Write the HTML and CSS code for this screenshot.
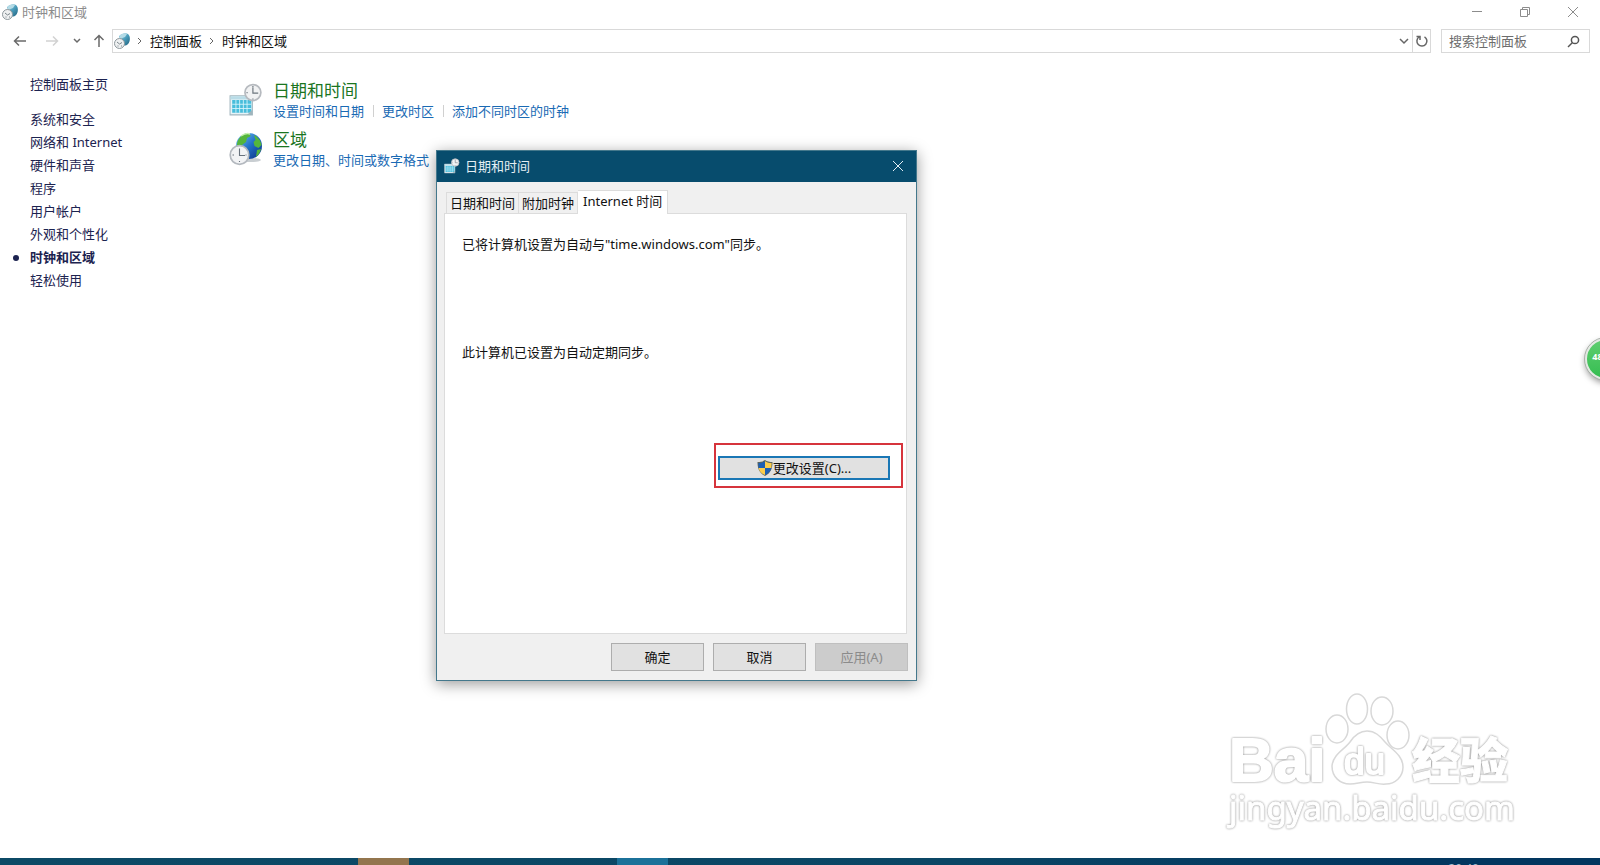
FILE: index.html
```html
<!DOCTYPE html>
<html lang="zh-CN">
<head>
<meta charset="utf-8">
<title>时钟和区域</title>
<link rel="stylesheet" href="styles.css">
</head>
<body>
<svg class="defs" aria-hidden="true">
  <defs>
    <linearGradient id="sea" x1="0" y1="0" x2="1" y2="1"><stop offset="0" stop-color="#7cc8f4"/><stop offset=".5" stop-color="#2272c8"/><stop offset="1" stop-color="#0a2f82"/></linearGradient>
    <linearGradient id="dim" x1="0" y1="0" x2="1" y2="1"><stop offset="0" stop-color="#a5d3e4"/><stop offset=".5" stop-color="#4a9dbb"/><stop offset="1" stop-color="#1f607d"/></linearGradient>
    <symbol id="globe-small" viewBox="0 0 16 16">
      <path d="M5 3C8 0 12-.5 14 1c2.500 2 2.500 7 0 10-2 2-5 2-7 0z" fill="url(#dim)"/>
      <path d="M6 2.500C8 .5 11 0 13 1l-2 3-5 2z" fill="#b4dbe6"/>
      <circle cx="5.500" cy="10.500" r="5" fill="#eef0f1" stroke="#8d979c"/>
      <path d="M3 9l2.500 2L8 9.500M3.500 13h1M7 13h1" fill="none" stroke="#6d7980" stroke-width=".9"/>
    </symbol>
    <symbol id="calendar" viewBox="0 0 32 32">
      <path d="M1 12h21v18H1z" fill="#e6f4f8" stroke="#a4b7bf"/>
      <path d="M1.500 12.500h20v3h-20z" fill="#b9dce7"/>
      <path d="M3 16h18v12H3z" fill="#48bddb"/>
      <path d="M3 20h18M3 24h18M6.500 16v12M10 16v12M13.500 16v12M17 16v12" stroke="#d9f6fc" stroke-width=".8"/>
      <path d="M17 30l5-5v5z" fill="#9fb5bd"/>
      <circle cx="22.500" cy="9" r="7.500" fill="#f1f2f3" stroke="#b6babf" stroke-width="1.600"/>
      <path d="M22.500 4v5.500h5M22.500 2.800v1M22.500 14.500v1M16.500 9h1" fill="none" stroke="#6b747d" stroke-width="1.100"/>
    </symbol>
    <symbol id="region" viewBox="0 0 34 34">
      <ellipse cx="22" cy="28" rx="10" ry="2" fill="#c9ced2"/>
      <circle cx="20" cy="14" r="13" fill="url(#sea)"/>
      <path d="M8 12c1-6 5-10 11-11l3 3-4 2-1 4-4 3-2 5-3-1zM25 3c4 2 7 6 7.500 10l-3 3-4-2-1-4 2-2zM28 18l4-1c-1 4-3 6-5 8z" fill="#54b63c"/>
      <path d="M12 4c3-2 6-3 9-2" fill="none" stroke="#c9f2b0" stroke-width="1.500"/>
      <circle cx="10.500" cy="23" r="9.300" fill="#f2f3f5" stroke="#b4b9bf" stroke-width="1.700"/>
      <path d="M10.500 16.500V23.500H16M10.500 29v1M3.500 23h1.500M16.500 23h1" fill="none" stroke="#68727d" stroke-width="1.100"/>
    </symbol>
  </defs>
</svg>

<header class="titlebar">
  <svg class="icon16"><use href="#globe-small"/></svg>
  <h1 class="window-title">时钟和区域</h1>
  <div class="window-buttons">
    <button aria-label="最小化"><svg width="12" height="12"><path d="M1 5.500h10"/></svg></button>
    <button aria-label="还原"><svg width="12" height="12"><path d="M1.500 3.500h7v7h-7zM3.500 3.500v-2h7v7h-2"/></svg></button>
    <button aria-label="关闭"><svg width="12" height="12"><path d="M1 1l10 10M11 1L1 11"/></svg></button>
  </div>
</header>

<nav class="toolbar" aria-label="导航">
  <div class="nav-buttons">
    <button aria-label="后退"><svg width="14" height="12"><path d="M13 6H1.500M6 1.500 1.500 6 6 10.500"/></svg></button>
    <button class="faint" aria-label="前进"><svg width="14" height="12"><path d="M1 6h11.500M8 1.500 12.500 6 8 10.500"/></svg></button>
    <button class="narrow" aria-label="最近的位置"><svg width="8" height="6"><path d="M1 1l3 3 3-3"/></svg></button>
    <button class="narrow" aria-label="向上"><svg width="12" height="14"><path d="M6 13V2M1.500 6 6 1.500 10.500 6"/></svg></button>
  </div>
  <div class="address">
    <svg class="icon16"><use href="#globe-small"/></svg>
    <svg class="sep" width="6" height="8"><path d="M1 1l3 3-3 3"/></svg>
    <a href="#">控制面板</a>
    <svg class="sep" width="6" height="8"><path d="M1 1l3 3-3 3"/></svg>
    <a href="#">时钟和区域</a>
    <button class="history" aria-label="以前的位置"><svg width="10" height="7"><path d="M1 1l4 4 4-4"/></svg></button>
    <button class="refresh" aria-label="刷新"><svg width="14" height="14"><path d="M9.500 2.800A5 5 0 1 1 4 3M1.500 2.500H5v3.500"/></svg></button>
  </div>
  <form class="search">
    <input type="text" aria-label="搜索控制面板" placeholder="搜索控制面板">
    <svg width="13" height="13"><circle cx="8" cy="5" r="3.600"/><path d="M5.500 7.500 1 12"/></svg>
  </form>
</nav>

<div class="content">
  <aside class="sidebar">
    <a class="home" href="#">控制面板主页</a>
    <ul>
      <li><a href="#">系统和安全</a></li>
      <li><a href="#">网络和 Internet</a></li>
      <li><a href="#">硬件和声音</a></li>
      <li><a href="#">程序</a></li>
      <li><a href="#">用户帐户</a></li>
      <li><a href="#">外观和个性化</a></li>
      <li class="current"><a href="#">时钟和区域</a></li>
      <li><a href="#">轻松使用</a></li>
    </ul>
  </aside>
  <main class="categories">
    <section class="category">
      <svg class="icon34"><use href="#calendar"/></svg>
      <div>
        <h2><a href="#">日期和时间</a></h2>
        <div class="tasks"><a href="#">设置时间和日期</a><a href="#">更改时区</a><a href="#">添加不同时区的时钟</a></div>
      </div>
    </section>
    <section class="category">
      <svg class="icon34"><use href="#region"/></svg>
      <div>
        <h2><a href="#">区域</a></h2>
        <div class="tasks"><a href="#">更改日期、时间或数字格式</a></div>
      </div>
    </section>
  </main>
</div>

<div class="dialog" role="dialog" aria-labelledby="dialog-title">
  <div class="dialog-title">
    <svg class="icon16"><use href="#calendar"/></svg>
    <span id="dialog-title">日期和时间</span>
    <button aria-label="关闭"><svg width="12" height="12"><path d="M1 1l10 10M11 1L1 11"/></svg></button>
  </div>
  <div class="dialog-body">
    <div class="tabs" role="tablist">
      <button role="tab">日期和时间</button>
      <button role="tab">附加时钟</button>
      <button role="tab" class="active" aria-selected="true">Internet 时间</button>
    </div>
    <div class="panel" role="tabpanel">
      <p class="sync">已将计算机设置为自动与"time.windows.com"同步。</p>
      <p class="schedule">此计算机已设置为自动定期同步。</p>
      <div class="highlight">
        <button class="change">
          <svg width="16" height="16" viewBox="0 0 16 16"><path d="M8 0c2 1.500 4.500 2 7.500 2C15.500 8 14 13 8 16 2 13 .5 8 .5 2 3.500 2 6 1.500 8 0z" fill="#5d665f"/><path d="M8 1.200V8H1.600L1.400 3C4 3 6 2.500 8 1.200zM8 8h6.400C13.500 11.500 11.500 13.600 8 15z" fill="#1d5fb4"/><path d="M8 1.200V8h6.400l.2-5C12 3 10 2.500 8 1.200zM8 8H1.600C2.500 11.500 4.500 13.600 8 15z" fill="#fccd4c"/></svg>更改设置(C)...
        </button>
      </div>
    </div>
    <div class="actions">
      <button>确定</button>
      <button>取消</button>
      <button disabled>应用(A)</button>
    </div>
  </div>
</div>

<button class="ball">48</button>

<svg class="watermark" viewBox="0 0 320 160" aria-hidden="true">
  <text class="wm-bold" x="19" y="101" font-size="62">Bai</text>
  <ellipse cx="127" cy="49" rx="11" ry="14"/>
  <ellipse cx="147" cy="29" rx="10.500" ry="15"/>
  <ellipse cx="172" cy="31" rx="11" ry="14"/>
  <ellipse cx="188" cy="55" rx="11" ry="14"/>
  <path d="M157 51c-8 0-13 5-17 11-5 7-17 12-18 24 0 11 8 18 18 18 7 0 10-2 17-2s12 3 19 2c9 0 17-7 17-17 0-12-12-18-18-25-5-6-10-11-18-11z"/>
  <text class="wm-du" x="134" y="94" font-size="37">du</text>
  <text class="wm-cjk" x="202" y="98" font-size="48">经验</text>
  <text class="wm-url" x="19" y="140" font-size="33">jingyan.baidu.com</text>
</svg>

<footer class="taskbar">
  <span class="task task-brown"></span>
  <span class="task task-blue"></span>
  <time class="clock">20:40</time>
</footer>
</body>
</html>
```
FILE: styles.css
```css
* { box-sizing: border-box; }

body {
  position: relative;
  display: flex;
  flex-direction: column;
  min-height: 100vh;
  margin: 0;
  overflow: hidden;
  background: #fff;
  color: #111;
  font: 13px/20px "Noto Sans", "Noto Sans CJK SC", sans-serif;
}

h1, h2, p, ul { margin: 0; padding: 0; font-size: inherit; font-weight: normal; }
ul { list-style: none; }
a { color: inherit; text-decoration: none; }
button { padding: 0; border: 0; background: none; color: inherit; font: inherit; }
svg { flex: none; fill: none; stroke-width: 1; }
.defs { position: absolute; width: 0; height: 0; }
.icon16 { width: 16px; height: 16px; }
.icon34 { width: 34px; height: 34px; }

.titlebar { display: flex; align-items: center; gap: 4px; height: 23px; padding-left: 2px; color: #8c8c8c; }
.window-buttons { display: flex; margin-left: auto; padding-right: 3px; }
.window-buttons button { display: grid; place-items: center; width: 48px; height: 22px; stroke: #8c8c8c; }

.toolbar { display: flex; align-items: center; height: 36px; padding: 0 10px 0 8px; }
.nav-buttons { display: flex; width: 104px; stroke: #6a6a6a; }
.nav-buttons button { display: grid; place-items: center; width: 24px; height: 24px; }
.nav-buttons svg { stroke-width: 1.5; }
.nav-buttons .faint { margin-left: 8px; stroke: #d2d2d2; }
.nav-buttons .narrow { width: 22px; margin-left: 2px; }
.nav-buttons .narrow + .narrow { margin-left: 0; }
.address { display: flex; flex: 1; align-items: center; gap: 7px; height: 24px; padding-left: 1px; border: 1px solid #d9d9d9; }
.address .sep { stroke: #666; }
.address .history { display: grid; place-items: center; width: 16px; height: 22px; margin-left: auto; stroke: #666; }
.address .refresh { display: grid; place-items: center; width: 18px; height: 22px; margin-left: -7px; border-left: 1px solid #d9d9d9; stroke: #666; }
.history svg, .refresh svg, .search svg { stroke-width: 1.5; }
.search { display: flex; align-items: center; width: 149px; height: 24px; margin-left: 10px; padding: 0 9px 0 7px; border: 1px solid #d9d9d9; }
.search input { flex: 1; min-width: 0; padding: 0; border: 0; outline: 0; background: none; font: inherit; }
.search input::placeholder { color: #6d6d6d; opacity: 1; }
.search svg { stroke: #555; }

.content { display: flex; flex: 1; }
.sidebar { width: 229px; padding: 14px 0 0 30px; color: #1c2350; line-height: 23px; }
.home { display: block; margin-bottom: 12px; }
.current { display: flex; align-items: center; font-weight: bold; }
.current::before { width: 6px; height: 6px; margin: 0 11px 0 -17px; border-radius: 50%; background: #1c2350; content: ""; }
.categories { display: flex; flex-direction: column; gap: 9px; padding-top: 21px; }
.category { display: flex; gap: 10px; }
.category .icon34 { margin-top: 3px; }
.category h2 { color: #1a751f; font-size: 17px; line-height: 22px; }
.tasks { display: flex; line-height: 18px; color: #1a6ab4; }
.tasks a + a { margin-left: 9px; padding-left: 9px; background: linear-gradient(#d0d0d0, #d0d0d0) left center / 1px 12px no-repeat; }

.dialog {
  position: absolute;
  top: 150px;
  left: 436px;
  width: 481px;
  border: 1px solid #44788c;
  background: #f0f0f0;
  box-shadow: 0 3px 14px rgba(0, 0, 0, .4);
}
.dialog-title { display: flex; align-items: center; gap: 5px; height: 31px; padding: 0 11px 2px 7px; background: #074c6d; color: #e4eff4; }
.dialog-title button { display: grid; place-items: center; width: 14px; height: 22px; margin-left: auto; stroke: #e4eff4; }
.dialog-body { padding: 8px 9px 9px 7px; }
.tabs { display: flex; align-items: flex-end; padding-left: 2px; }
.tabs button { height: 21px; padding: 0 3px; border: 1px solid #dcdcdc; border-bottom: 0; line-height: 18px; }
.tabs button + button { border-left: 0; }
.tabs .active { height: 24px; margin-bottom: -1px; padding: 0 5px 4px; background: #fff; }
.panel { height: 421px; padding: 20px 3px 0 17px; border: 1px solid #dcdcdc; background: #fff; }
.sync { margin-bottom: 88px; }
.schedule { margin-bottom: 81px; }
.highlight { width: 189px; margin-left: auto; padding: 11px 11px 6px 2px; border: 2px solid #d6343c; }
.change { display: flex; align-items: center; justify-content: center; width: 172px; height: 24px; border: 2px solid #1a77b5; background: #e1e1e1; }
.actions { display: flex; justify-content: flex-end; gap: 9px; margin: 9px -1px 0 0; }
.actions button { width: 93px; height: 28px; border: 1px solid #adadad; background: #e1e1e1; }
.actions button:disabled { border-color: #bfbfbf; background: #ccc; color: #8b8b8b; }

.ball {
  position: absolute;
  top: 338px;
  right: -27px;
  width: 42px;
  height: 42px;
  padding: 0 20px 4px 3px;
  border: 2px solid #e3e9e3;
  border-radius: 50%;
  outline: 1px solid #a9b0a9;
  background: linear-gradient(#5fce70, #35bd51);
  box-shadow: 0 3px 6px rgba(0, 0, 0, .4);
  color: #fff;
  font-size: 9px;
  font-weight: bold;
}

.watermark { position: absolute; right: 70px; bottom: 25px; width: 320px; height: 160px; fill: #fff; stroke: #d8d8d8; stroke-width: 1.5; }
.watermark text { stroke: #fff; stroke-width: 2; stroke-linejoin: round; filter: drop-shadow(0 0 1px #888); }
.wm-bold { font-family: "Liberation Sans", Arial, sans-serif; font-weight: bold; }
.wm-du { font-family: "Liberation Sans", Arial, sans-serif; }
.wm-cjk { font-family: "Noto Sans CJK SC", sans-serif; font-weight: 900; }
.watermark .wm-cjk { stroke-width: 1; }
.wm-url { font-family: "Noto Sans", sans-serif; }
.watermark .wm-url { stroke-width: 1; }

.taskbar { display: flex; height: 7px; overflow: hidden; background: linear-gradient(90deg, #0c4a66 0, #0a4665 60%, #02365f 88%); }
.task { width: 51px; height: 7px; }
.task-brown { margin-left: 358px; background: #93754e; }
.task-blue { margin-left: 208px; background: #1b7199; }
.clock { margin-left: auto; padding: 4px 121px 0 0; color: #9db9cc; font-size: 12px; line-height: 14px; }
```
